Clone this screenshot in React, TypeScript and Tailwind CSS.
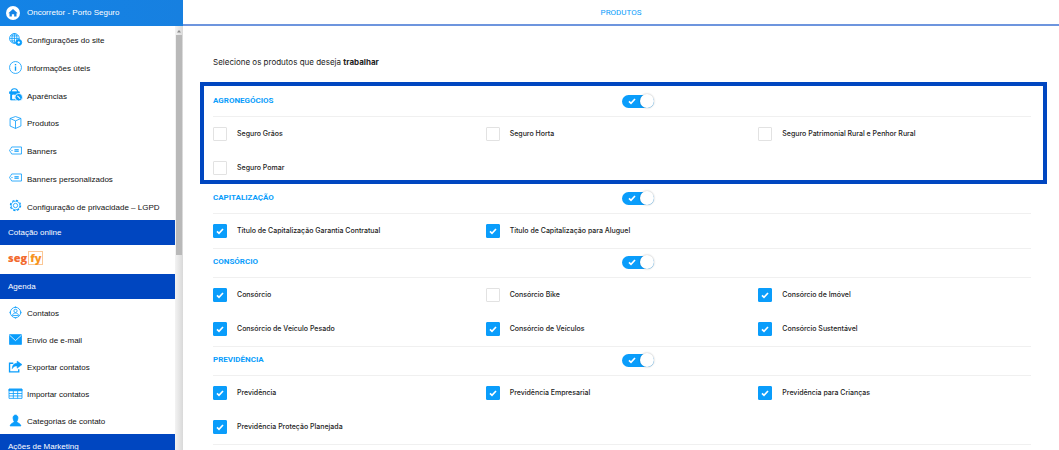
import React, { useState } from 'react';

interface NavItem {
  label: string;
  icon: React.ReactNode;
}

interface Product {
  name: string;
  checked: boolean;
}

interface ProductGroup {
  title: string;
  highlighted?: boolean;
  products: Product[];
}

const bannerIcon = (
  <>
    <path d="M5 5.500h18v13H5l-1.500-2.500L1 12l2.500-4z" />
    <path d="M10 10.500h8M10 13.500h8" strokeWidth="2" />
    <circle cx="5.500" cy="12" r="0.500" />
  </>
);

const siteItems: NavItem[] = [
  {
    label: 'Configurações do site',
    icon: (
      <>
        <circle cx="10" cy="10" r="9" />
        <ellipse cx="10" cy="10" rx="4.5" ry="9" />
        <path d="M10 1v18M1 10h18M2.5 5.5h15M2.5 14.5h9" />
        <circle cx="18" cy="17.5" r="5.5" fill="currentColor" />
        <circle cx="18" cy="17.5" r="1.5" stroke="#fff" fill="#fff" />
      </>
    ),
  },
  {
    label: 'Informações úteis',
    icon: (
      <>
        <circle cx="12" cy="12" r="11" />
        <path d="M12 10v8" strokeWidth="2.5" />
        <path d="M12 5.5V8" strokeWidth="2.5" />
      </>
    ),
  },
  {
    label: 'Aparências',
    icon: (
      <>
        <path d="M4 8C4 -1 16 -1 16 8" strokeWidth="2" />
        <path d="M1 7h18v3l-2 2v10H3V12l-2-2z" fill="currentColor" />
        <path d="M6.500 13v7h4v-7z" fill="#fff" stroke="#fff" />
        <circle cx="18" cy="17" r="7" fill="currentColor" stroke="#fff" />
        <path d="M15.500 14.500l5 5" stroke="#fff" strokeWidth="2" />
      </>
    ),
  },
  {
    label: 'Produtos',
    icon: <path d="M12 1l10 3.5v14L12 23 2 18.5v-14zM2 4.5L12 9l10-4.5M12 9v14" />,
  },
  { label: 'Banners', icon: bannerIcon },
  { label: 'Banners personalizados', icon: bannerIcon },
  {
    label: 'Configuração de privacidade – LGPD',
    icon: (
      <>
        <circle cx="12" cy="12" r="8" />
        <circle cx="12" cy="12" r="9.5" strokeDasharray="4 3.46" strokeWidth="2" />
        <circle cx="12" cy="12" r="4" />
      </>
    ),
  },
];

const agendaItems: NavItem[] = [
  {
    label: 'Contatos',
    icon: (
      <>
        <circle cx="12" cy="12" r="9.5" />
        <path d="M12 1v2M12 21v2M1 12h2M21 12h2" strokeWidth="2.5" />
        <circle cx="12" cy="9" r="3" />
        <path d="M6.5 17.5c0-6 11-6 11 0z" />
      </>
    ),
  },
  {
    label: 'Envio de e-mail',
    icon: (
      <>
        <path d="M1 3h22v18H1z" fill="currentColor" />
        <path d="M1 4l11 10L23 4" stroke="#fff" />
      </>
    ),
  },
  {
    label: 'Exportar contatos',
    icon: (
      <>
        <path d="M8 6H1v16h17v-5" strokeWidth="2.5" />
        <path d="M15 2l9 6.5-9 6.5v-4c-4 0-7 1-9 5 0-7 4-10 9-10z" fill="currentColor" strokeWidth="1" />
      </>
    ),
  },
  {
    label: 'Importar contatos',
    icon: (
      <>
        <path d="M0 4h24v3H0z" fill="currentColor" />
        <path d="M0 4h24v17H0zM0 12h24M0 16.5h24M8 7v14M16 7v14" />
      </>
    ),
  },
  {
    label: 'Categorias de contato',
    icon: (
      <path
        d="M12 2C8.500 2 7.500 5 7.500 7.500S9 12.500 9.500 14C9 17 3 17 2 22h20c-1-5-7-5-7.500-8 .5-1.500 2-4 2-6.500S15.500 2 12 2z"
        fill="currentColor"
      />
    ),
  },
];

const groups: ProductGroup[] = [
  {
    title: 'AGRONEGÓCIOS',
    highlighted: true,
    products: [
      { name: 'Seguro Grãos', checked: false },
      { name: 'Seguro Horta', checked: false },
      { name: 'Seguro Patrimonial Rural e Penhor Rural', checked: false },
      { name: 'Seguro Pomar', checked: false },
    ],
  },
  {
    title: 'CAPITALIZAÇÃO',
    products: [
      { name: 'Título de Capitalização Garantia Contratual', checked: true },
      { name: 'Título de Capitalização para Aluguel', checked: true },
    ],
  },
  {
    title: 'CONSÓRCIO',
    products: [
      { name: 'Consórcio', checked: true },
      { name: 'Consórcio Bike', checked: false },
      { name: 'Consórcio de Imóvel', checked: true },
      { name: 'Consórcio de Veículo Pesado', checked: true },
      { name: 'Consórcio de Veículos', checked: true },
      { name: 'Consórcio Sustentável', checked: true },
    ],
  },
  {
    title: 'PREVIDÊNCIA',
    products: [
      { name: 'Previdência', checked: true },
      { name: 'Previdência Empresarial', checked: true },
      { name: 'Previdência para Crianças', checked: true },
      { name: 'Previdência Proteção Planejada', checked: true },
    ],
  },
];

function NavLink({ item }: { item: NavItem }) {
  return (
    <li className="flex">
      <a href="#" className="flex items-center gap-[5px] pl-[9px] pt-[3px] text-[#111]">
        <svg
          viewBox="0 0 24 24"
          className="mb-1 size-[13px] shrink-0 overflow-visible text-[#0a9dfb]"
          fill="none"
          stroke="currentColor"
          strokeWidth="1.5"
        >
          {item.icon}
        </svg>
        {item.label}
      </a>
    </li>
  );
}

function NavHeading({ children }: { children: React.ReactNode }) {
  return (
    <h2 className="flex h-[25px] shrink-0 items-center bg-[#0046c0] pl-2 text-white">{children}</h2>
  );
}

function Sidebar() {
  return (
    <aside className="flex w-[183px] shrink-0 flex-col font-['Liberation_Sans',Arial,sans-serif] text-[8px] leading-3">
      <a
        href="#"
        className="flex h-[26px] shrink-0 items-center gap-[7px] bg-linear-to-r from-[#1383e6] to-[#1780e0] pl-1.5 text-white"
      >
        <svg viewBox="0 0 24 24" className="size-3.5">
          <circle cx="12" cy="12" r="12" fill="#fff" />
          <path d="M12 5l8 7.500h-2V18h-4v-4h-4v4H6v-5.500H4z" fill="#1383e6" />
        </svg>
        Oncorretor - Porto Seguro
      </a>

      <div className="flex min-h-0 flex-1">
        <nav className="min-w-0 flex-1 overflow-hidden whitespace-nowrap">
          <ul className="grid h-[194px] auto-rows-fr">
            {siteItems.map((item) => (
              <NavLink key={item.label} item={item} />
            ))}
          </ul>

          <NavHeading>Cotação online</NavHeading>
          <a
            href="#"
            className="flex h-[29px] items-center gap-px pb-1 pl-2 font-['Open_Sans',sans-serif] text-[11px] font-extrabold leading-3 text-[#f26a2e]"
          >
            <span>seg</span>
            <span className="border border-[#fbc795] px-px text-[#f7941e]">fy</span>
          </a>

          <NavHeading>Agenda</NavHeading>
          <ul className="grid auto-rows-[27px]">
            {agendaItems.map((item) => (
              <NavLink key={item.label} item={item} />
            ))}
          </ul>

          <NavHeading>Ações de Marketing</NavHeading>
        </nav>

        {/* Scroll track */}
        <div className="flex w-2 shrink-0 flex-col items-center bg-linear-to-r from-[#f3f3f3] to-[#d9d9d9]">
          <svg viewBox="0 0 8 8" className="h-[9px] w-2">
            <path d="M2 6l2-2.500L6 6z" fill="#8a8a8a" />
          </svg>
          <div className="h-[220px] w-1.5 bg-[#b9b9b9]" />
        </div>
      </div>
    </aside>
  );
}

function Tick({ className }: { className: string }) {
  return (
    <svg viewBox="0 0 12 12" className={className} fill="none" stroke="#fff" strokeWidth="2.5">
      <path d="M1.500 6.500l3 3 6-6.500" />
    </svg>
  );
}

function ProductCheckbox({ product }: { product: Product }) {
  const [checked, setChecked] = useState(product.checked);

  return (
    <label className="flex h-[34px] items-center gap-2.5 whitespace-nowrap pb-px text-[7px] font-medium">
      <span className="relative flex">
        <input
          type="checkbox"
          checked={checked}
          onChange={() => setChecked(!checked)}
          className="size-3.5 appearance-none rounded-[1px] border border-[#e2e2e2] bg-white checked:border-[#0a9dfb] checked:bg-[#0a9dfb]"
        />
        {checked && <Tick className="pointer-events-none absolute inset-0 m-auto size-2" />}
      </span>
      {product.name}
    </label>
  );
}

function GroupSwitch({ label }: { label: string }) {
  const [on, setOn] = useState(true);

  return (
    <label className="relative flex w-8 items-center">
      <input
        type="checkbox"
        role="switch"
        aria-label={label}
        checked={on}
        onChange={() => setOn(!on)}
        className="peer h-[13px] w-8 appearance-none rounded-full bg-[#d0d0d0] checked:bg-[#0a9dfb]"
      />
      <Tick className="pointer-events-none absolute left-1.5 size-2" />
      <span className="pointer-events-none absolute left-0 size-3.5 rounded-full bg-white shadow-[0_0_2px_rgba(0,0,0,0.3)] peer-checked:left-[18px]" />
    </label>
  );
}

function GroupSection({ group }: { group: ProductGroup }) {
  return (
    <section className={group.highlighted ? 'relative' : 'border-b border-[#f0f0f0]'}>
      {group.highlighted && (
        <div className="pointer-events-none absolute -left-[13px] -right-4 -top-1.5 bottom-px border-4 border-[#0046c0]" />
      )}
      <div className="grid h-[29px] grid-cols-2 items-center border-b border-[#f0f0f0] pb-0.5">
        <h3 className="font-['Roboto','Liberation_Sans',sans-serif] font-bold text-[#0a9dfb]">{group.title}</h3>
        <GroupSwitch label={group.title} />
      </div>
      <div className="grid grid-cols-3">
        {group.products.map((product) => (
          <ProductCheckbox key={product.name} product={product} />
        ))}
      </div>
    </section>
  );
}

export default function App() {
  return (
    <div className="flex h-screen overflow-hidden bg-white font-['Inter','Liberation_Sans',sans-serif] text-[#222]">
      <Sidebar />

      <main className="min-w-0 flex-1 text-[8px] leading-3">
        <header className="flex h-[26px] items-center justify-center border-b-2 border-[#6d95de] pt-0.5">
          <h1 className="font-['Roboto','Liberation_Sans',sans-serif] text-[#0a9dfb]">PRODUTOS</h1>
        </header>

        <div className="pl-[30px] pr-7">
          <p className="pb-5 pt-[30px]">
            Selecione os produtos que deseja <strong>trabalhar</strong>
          </p>
          {groups.map((group) => (
            <GroupSection key={group.title} group={group} />
          ))}
        </div>
      </main>
    </div>
  );
}
